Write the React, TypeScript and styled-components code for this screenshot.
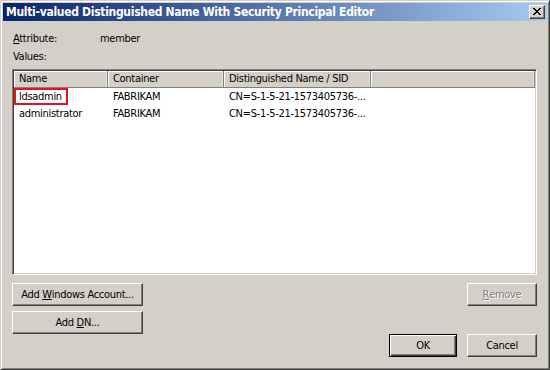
import React from "react";
import styled, { createGlobalStyle, css } from "styled-components";

const FACE = "#d4d0c8";
const FONT = `"DejaVu Sans Condensed", "Liberation Sans", sans-serif`;

const Global = createGlobalStyle`
  html, body { margin: 0; padding: 0; background: ${FACE}; }
  body { font-family: ${FONT}; font-size: 11px; letter-spacing: -0.3px; color: #000; }
  * { box-sizing: border-box; }
`;

const Window = styled.div`
  width: 550px;
  height: 370px;
  background: ${FACE};
  border: 1px solid;
  border-color: ${FACE} #404040 #404040 ${FACE};
  box-shadow: inset 1px 1px #ffffff, inset -1px -1px #808080;
  padding: 2px;
  display: flex;
  flex-direction: column;
`;

const TitleBar = styled.div`
  height: 18px;
  flex: none;
  display: flex;
  align-items: center;
  padding: 0 2px 0 3px;
  background: linear-gradient(to right, #0a246a, #a6caf0);
  color: #fff;
  font-weight: bold;
  font-size: 12px;
`;

const TitleText = styled.span`
  flex: 1;
  white-space: nowrap;
  overflow: hidden;
`;

const raised = css`
  background: ${FACE};
  border: 1px solid;
  border-color: #ffffff #404040 #404040 #ffffff;
  box-shadow: inset -1px -1px #808080, inset 1px 1px ${FACE};
`;

const CloseButton = styled.div`
  ${raised};
  width: 16px;
  height: 14px;
  flex: none;
  display: flex;
  align-items: center;
  justify-content: center;
  padding-bottom: 1px;
`;

const Content = styled.div`
  flex: 1;
  display: flex;
  flex-direction: column;
  padding: 11px 10px 10px 9px;
`;

const FieldRow = styled.div<{ $gap: number }>`
  height: 13px;
  line-height: 13px;
  display: flex;
  margin-bottom: ${(p) => p.$gap}px;
  padding-left: 1px;
`;

const FieldLabel = styled.span`
  width: 87px;
`;

const ListView = styled.div`
  height: 206px;
  background: #fff;
  border: 1px solid;
  border-color: #808080 #ffffff #ffffff #808080;
  box-shadow: inset 1px 1px #404040, inset -1px -1px ${FACE};
  padding: 1px;
  display: flex;
  flex-direction: column;
  margin-bottom: 8px;
`;

const HeaderRow = styled.div`
  height: 17px;
  display: flex;
  flex: none;
`;

const HeaderCell = styled.div<{ $w?: number }>`
  ${(p) => (p.$w ? `width: ${p.$w}px; flex: none;` : `flex: 1;`)}
  height: 17px;
  line-height: 15px;
  padding-left: 5px;
  background: ${FACE};
  border-right: 1px solid #808080;
  border-bottom: 1px solid #808080;
  box-shadow: inset 1px 1px #ffffff, inset -1px 0 #e8e6e0;
  white-space: nowrap;
`;

const Row = styled.div`
  height: 17px;
  display: flex;
  align-items: center;
`;

const Cell = styled.div<{ $w: number }>`
  width: ${(p) => p.$w}px;
  flex: none;
  padding-left: 5px;
  white-space: nowrap;
`;

const Highlight = styled.span`
  display: inline-block;
  margin-left: -5px;
  padding: 0 3px 0 3px;
  width: 54px;
  height: 17px;
  line-height: 13px;
  border: 2px solid #e0141e;
`;

const Actions = styled.div`
  display: grid;
  grid-template-columns: 131px 1fr 68px 70px;
  grid-template-rows: 23px 5px 23px 23px;
  column-gap: 10px;
`;

const Button = styled.div<{ $col: number; $row: number; $default?: boolean; $disabled?: boolean }>`
  ${raised};
  grid-column: ${(p) => p.$col};
  grid-row: ${(p) => p.$row};
  display: flex;
  align-items: center;
  justify-content: center;
  white-space: nowrap;
  padding-bottom: 1px;
  ${(p) =>
    p.$default &&
    css`
      border: 1px solid #000;
      box-shadow: inset 1px 1px #ffffff, inset -1px -1px #404040, inset -2px -2px #808080;
    `}
  ${(p) =>
    p.$disabled &&
    css`
      color: #808080;
      text-shadow: 1px 1px #ffffff;
    `}
`;

const CloseGlyph = () => (
  <svg width="8" height="7" viewBox="0 0 8 7" shapeRendering="crispEdges">
    <path
      d="M0 0h2v1H0zM6 0h2v1H6zM1 1h2v1H1zM5 1h2v1H5zM2 2h4v1H2zM3 3h2v1H3zM2 4h4v1H2zM1 5h2v1H1zM5 5h2v1H5zM0 6h2v1H0zM6 6h2v1H6z"
      fill="#000"
    />
  </svg>
);

const rows = [
  { name: "ldsadmin", container: "FABRIKAM", dn: "CN=S-1-5-21-1573405736-...", mark: true },
  { name: "administrator", container: "FABRIKAM", dn: "CN=S-1-5-21-1573405736-...", mark: false },
];

export default function App() {
  return (
    <>
      <Global />
      <Window>
        <TitleBar>
          <TitleText>Multi-valued Distinguished Name With Security Principal Editor</TitleText>
          <CloseButton>
            <CloseGlyph />
          </CloseButton>
        </TitleBar>
        <Content>
          <FieldRow $gap={5}>
            <FieldLabel>
              <u>A</u>ttribute:
            </FieldLabel>
            <span>member</span>
          </FieldRow>
          <FieldRow $gap={6}>
            <FieldLabel>Values:</FieldLabel>
          </FieldRow>
          <ListView>
            <HeaderRow>
              <HeaderCell $w={94}>Name</HeaderCell>
              <HeaderCell $w={116}>Container</HeaderCell>
              <HeaderCell $w={147}>Distinguished Name / SID</HeaderCell>
              <HeaderCell />
            </HeaderRow>
            {rows.map((r) => (
              <Row key={r.name}>
                <Cell $w={94}>{r.mark ? <Highlight>{r.name}</Highlight> : r.name}</Cell>
                <Cell $w={116}>{r.container}</Cell>
                <Cell $w={147}>{r.dn}</Cell>
              </Row>
            ))}
          </ListView>
          <Actions>
            <Button $col={1} $row={1}>
              Add&nbsp;<u>W</u>indows Account...
            </Button>
            <Button $col={4} $row={1} $disabled>
              <u>R</u>emove
            </Button>
            <Button $col={1} $row={3}>
              Add&nbsp;<u>D</u>N...
            </Button>
            <Button $col={3} $row={4} $default>
              OK
            </Button>
            <Button $col={4} $row={4}>
              Cancel
            </Button>
          </Actions>
        </Content>
      </Window>
    </>
  );
}
